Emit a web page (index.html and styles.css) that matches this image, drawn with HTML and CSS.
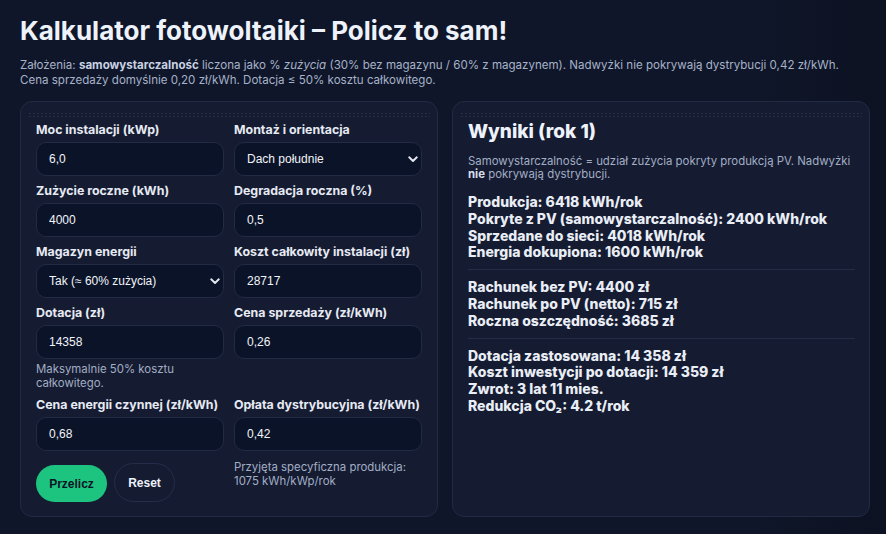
FILE: index.html
```html
<!DOCTYPE html>
<html lang="pl">
<head>
<meta charset="utf-8">
<title>Kalkulator fotowoltaiki</title>
<link rel="stylesheet" href="styles.css">
</head>
<body>
<div class="page">
  <h1 class="title">Kalkulator fotowoltaiki – Policz to sam!</h1>
  <p class="intro">Założenia: <b>samowystarczalność</b> liczona jako % <i>zużycia</i> (30% bez magazynu / 60% z magazynem). Nadwyżki nie pokrywają dystrybucji 0,42 zł/kWh.<br>Cena sprzedaży domyślnie 0,20 zł/kWh. Dotacja ≤ 50% kosztu całkowitego.</p>
  <div class="cols">
    <section class="card form-card">
      <div class="form-grid">
        <div class="field">
          <label class="label">Moc instalacji (kWp)</label>
          <input class="input" value="6,0">
        </div>
        <div class="field">
          <label class="label">Montaż i orientacja</label>
          <div class="select-wrap">
            <select class="input select"><option>Dach południe</option></select>
            <svg class="chev" width="10" height="7" viewBox="0 0 10 7"><path d="M1.2 1.3 L5 5 L8.8 1.3" fill="none" stroke="#e3e8f1" stroke-width="1.9" stroke-linecap="round" stroke-linejoin="round"/></svg>
          </div>
        </div>
        <div class="field">
          <label class="label">Zużycie roczne (kWh)</label>
          <input class="input" value="4000">
        </div>
        <div class="field">
          <label class="label">Degradacja roczna (%)</label>
          <input class="input" value="0,5">
        </div>
        <div class="field">
          <label class="label">Magazyn energii</label>
          <div class="select-wrap">
            <select class="input select"><option>Tak (≈ 60% zużycia)</option></select>
            <svg class="chev" width="10" height="7" viewBox="0 0 10 7"><path d="M1.2 1.3 L5 5 L8.8 1.3" fill="none" stroke="#e3e8f1" stroke-width="1.9" stroke-linecap="round" stroke-linejoin="round"/></svg>
          </div>
        </div>
        <div class="field">
          <label class="label">Koszt całkowity instalacji (zł)</label>
          <input class="input" value="28717">
        </div>
        <div class="field">
          <label class="label">Dotacja (zł)</label>
          <input class="input" value="14358">
          <div class="hint hint-field">Maksymalnie 50% kosztu<br>całkowitego.</div>
        </div>
        <div class="field">
          <label class="label">Cena sprzedaży (zł/kWh)</label>
          <input class="input" value="0,26">
        </div>
        <div class="field">
          <label class="label">Cena energii czynnej (zł/kWh)</label>
          <input class="input" value="0,68">
        </div>
        <div class="field">
          <label class="label">Opłata dystrybucyjna (zł/kWh)</label>
          <input class="input" value="0,42">
        </div>
        <div class="actions">
          <button class="btn btn-primary">Przelicz</button>
          <button class="btn btn-ghost">Reset</button>
        </div>
        <div class="hint hint-note">Przyjęta specyficzna produkcja:<br>1075 kWh/kWp/rok</div>
      </div>
    </section>
    <section class="card result-card">
      <h2 class="res-title">Wyniki (rok 1)</h2>
      <p class="res-note">Samowystarczalność = udział zużycia pokryty produkcją PV. Nadwyżki <b>nie</b> pokrywają dystrybucji.</p>
      <div class="res-group">
        <div>Produkcja: 6418 kWh/rok</div>
        <div>Pokryte z PV (samowystarczalność): 2400 kWh/rok</div>
        <div>Sprzedane do sieci: 4018 kWh/rok</div>
        <div>Energia dokupiona: 1600 kWh/rok</div>
      </div>
      <hr class="sep">
      <div class="res-group">
        <div>Rachunek bez PV: 4400 zł</div>
        <div>Rachunek po PV (netto): 715 zł</div>
        <div>Roczna oszczędność: 3685 zł</div>
      </div>
      <hr class="sep">
      <div class="res-group">
        <div>Dotacja zastosowana: 14 358 zł</div>
        <div>Koszt inwestycji po dotacji: 14 359 zł</div>
        <div>Zwrot: 3 lat 11 mies.</div>
        <div>Redukcja CO₂: 4.2 t/rok</div>
      </div>
    </section>
  </div>
</div>
</body>
</html>
```

FILE: styles.css
```css
* { box-sizing: border-box; }
html, body { margin: 0; padding: 0; }
body {
  background: linear-gradient(90deg, #0f1629 0%, #0f1629 85%, #0c1222 100%);
  color: #e5e9f2;
  font-family: Inter, "Noto Sans", sans-serif;
  height: 534px;
  overflow: hidden;
}
.page { padding: 15px 16px 0 20px; }
.title {
  margin: 0;
  font-size: 26px;
  line-height: 31px;
  font-weight: 700;
  color: #eef2fb;
}
.intro {
  margin: 12px 0 0;
  font-size: 11.55px;
  line-height: 15px;
  color: #a6b2c8;
  white-space: nowrap;
}
.intro b { font-weight: 700; color: #c9d2e2; }
.cols {
  margin-top: 13px;
  display: grid;
  grid-template-columns: 418px 418px;
  gap: 14px;
}
.card {
  background: #151b31;
  border: 1px solid #232a44;
  border-radius: 12px;
  padding: 10px 15px 14px;
}
.card::before {
  content: "";
  display: block;
  height: 5px;
  margin: 0 -8px 5px;
  background-image: radial-gradient(circle, rgba(120,135,170,0.18) 0.8px, transparent 1.1px);
  background-size: 4px 3px;
}
.form-grid {
  display: grid;
  grid-template-columns: 188px 188px;
  column-gap: 10px;
  row-gap: 7px;
}
.field { display: flex; flex-direction: column; }
.label {
  font-size: 12.4px;
  line-height: 16px;
  font-weight: 700;
  color: #e6eaf3;
  margin-bottom: 4px;
  white-space: nowrap;
}
.input {
  height: 34px;
  width: 100%;
  background: #0b1328;
  border: 1px solid #222a44;
  border-radius: 10px;
  color: #f1f4f9;
  font-family: "Liberation Sans", Arial, sans-serif;
  font-size: 12px;
  padding: 0 12px;
  outline: none;
}
.select-wrap { position: relative; }
.select { appearance: none; -webkit-appearance: none; padding-left: 12px; }
.chev { position: absolute; right: 4px; top: 14px; pointer-events: none; }
.hint {
  font-size: 11.4px;
  line-height: 13.5px;
  color: #a2aec4;
}
.hint-field { margin-top: 4px; }
.hint-note { margin-top: 3px; }
.actions { display: flex; align-items: flex-start; gap: 7px; padding-top: 5px; }
.btn {
  font-family: "Liberation Sans", Arial, sans-serif;
  font-weight: 700;
  font-size: 12px;
  border-radius: 20px;
  cursor: pointer;
}
.btn-primary {
  background: #1dc47f;
  color: #0b1326;
  border: none;
  height: 37px;
  width: 71px;
  margin-top: 2px;
}
.btn-ghost {
  background: transparent;
  color: #eef2fb;
  border: 1px solid #252d48;
  height: 39px;
  width: 61px;
}
.res-title {
  margin: -1px 0 0;
  font-size: 19px;
  line-height: 22px;
  font-weight: 800;
  color: #eef2fb;
}
.res-note {
  margin: 12px 0 0;
  font-size: 11.4px;
  line-height: 13px;
  color: #a2aec4;
}
.res-note b { color: #d8dfeb; }
.res-group {
  font-size: 14px;
  line-height: 16.8px;
  font-weight: 800;
  color: #e9edf5;
}
.res-note + .res-group { margin-top: 13px; }
.sep {
  border: none;
  border-top: 1px solid #252c45;
  margin: 8px 0 9px;
  width: 387px;
}
```
